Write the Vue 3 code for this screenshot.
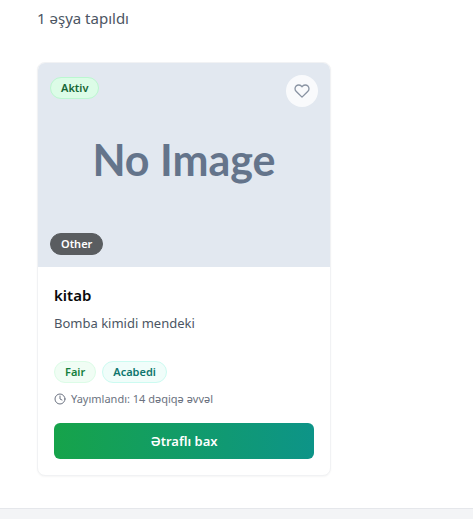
<script setup>
import { ref } from 'vue'

const items = [
  {
    id: 1,
    title: 'kitab',
    description: 'Bomba kimidi mendeki',
    status: 'Aktiv',
    category: 'Other',
    condition: 'Fair',
    location: 'Acabedi',
    published: '14 dəqiqə əvvəl',
  },
]
const liked = ref(false)
</script>

<template>
  <div class="page">
    <main class="content">
      <p class="count">{{ items.length }} əşya tapıldı</p>
      <div class="grid">
        <article v-for="item in items" :key="item.id" class="card">
          <div class="media">
            <span class="placeholder">No Image</span>
            <span class="badge status">{{ item.status }}</span>
            <button
              class="like"
              type="button"
              aria-label="Bəyən"
              :aria-pressed="liked"
              @click="liked = !liked"
            >
              <svg width="16" height="16" viewBox="0 0 24 24" :fill="liked ? 'currentColor' : 'none'" stroke="currentColor" stroke-width="2" stroke-linecap="round" stroke-linejoin="round">
                <path d="M20.84 4.61a5.5 5.5 0 0 0-7.78 0L12 5.67l-1.06-1.06a5.5 5.5 0 0 0-7.78 7.78l1.06 1.06L12 21.23l7.78-7.78 1.06-1.06a5.5 5.5 0 0 0 0-7.78z" />
              </svg>
            </button>
            <span class="badge category">{{ item.category }}</span>
          </div>
          <div class="body">
            <h3 class="title">{{ item.title }}</h3>
            <p class="description">{{ item.description }}</p>
            <div class="tags">
              <span class="badge condition">{{ item.condition }}</span>
              <span class="badge location">{{ item.location }}</span>
            </div>
            <div class="published">
              <svg width="12" height="12" viewBox="0 0 24 24" fill="none" stroke="currentColor" stroke-width="2" stroke-linecap="round" stroke-linejoin="round">
                <circle cx="12" cy="12" r="10" />
                <path d="M12 6v6l4 2" />
              </svg>
              <span>Yayımlandı: {{ item.published }}</span>
            </div>
            <button class="details" type="button">Ətraflı bax</button>
          </div>
        </article>
      </div>
    </main>
    <footer class="footer"></footer>
  </div>
</template>

<style>
body {
  margin: 0;
  background: #fff;
}
</style>

<style scoped>
.page {
  font-family: "Segoe UI", "Noto Sans", "Open Sans", sans-serif;
  overflow: hidden;
}
.content {
  padding: 6px 37px 32px;
}
.count {
  margin: 0 0 32px;
  font-size: 15px;
  line-height: 24px;
  color: #4b5563;
}
.grid {
  display: grid;
  grid-template-columns: minmax(0, 294px);
}
.card {
  border: 1px solid #f1f2f4;
  border-radius: 8px;
  background: #fff;
  box-shadow: 0 1px 2px rgba(0, 0, 0, 0.04);
  overflow: hidden;
}
.media {
  position: relative;
  display: flex;
  align-items: center;
  justify-content: center;
  height: 204px;
  background: #e2e8f0;
}
.placeholder {
  font-family: Lato, sans-serif;
  font-size: 43px;
  font-weight: 700;
  line-height: 52px;
  padding-bottom: 10px;
  color: #64748b;
}
.badge {
  box-sizing: border-box;
  height: 22px;
  padding: 0 10px;
  border: 1px solid transparent;
  border-radius: 11px;
  font-size: 11px;
  font-weight: 600;
  line-height: 20px;
}
.status {
  position: absolute;
  top: 14px;
  left: 12px;
  background: #dcfce7;
  border-color: #bbf7d0;
  color: #166534;
}
.category {
  position: absolute;
  bottom: 12px;
  left: 12px;
  background: #5a5d60;
  border-color: #5a5d60;
  color: #fff;
}
.like {
  position: absolute;
  top: 12px;
  right: 12px;
  display: flex;
  align-items: center;
  justify-content: center;
  width: 32px;
  height: 32px;
  padding: 0;
  border: 0;
  border-radius: 50%;
  background: #f9fafc;
  color: #8a94a3;
  cursor: pointer;
}
.body {
  padding: 16px;
}
.title {
  margin: 0 0 6px;
  font-size: 15px;
  font-weight: 600;
  line-height: 24px;
  color: #09090b;
}
.description {
  margin: 0 0 8px;
  min-height: 40px;
  font-size: 13px;
  line-height: 20px;
  color: #4b5563;
}
.tags {
  display: flex;
  gap: 6px;
}
.condition {
  background: #f0fdf4;
  border-color: #dcfce7;
  color: #15803d;
}
.location {
  background: #f0fdfa;
  border-color: #ccfbf1;
  color: #0f766e;
}
.published {
  display: flex;
  align-items: center;
  gap: 5px;
  margin: 8px 0 16px;
  font-size: 11px;
  line-height: 16px;
  color: #6b7280;
}
.details {
  display: block;
  width: 100%;
  height: 36px;
  padding: 0;
  border: 0;
  border-radius: 6px;
  background: linear-gradient(to right, #16a34a, #0d9488);
  color: #fff;
  font-family: inherit;
  font-size: 13px;
  font-weight: 600;
  line-height: 20px;
  cursor: pointer;
}
.footer {
  min-height: 32px;
  border-top: 1px solid #e5e7eb;
  background: #f3f4f6;
}
</style>
